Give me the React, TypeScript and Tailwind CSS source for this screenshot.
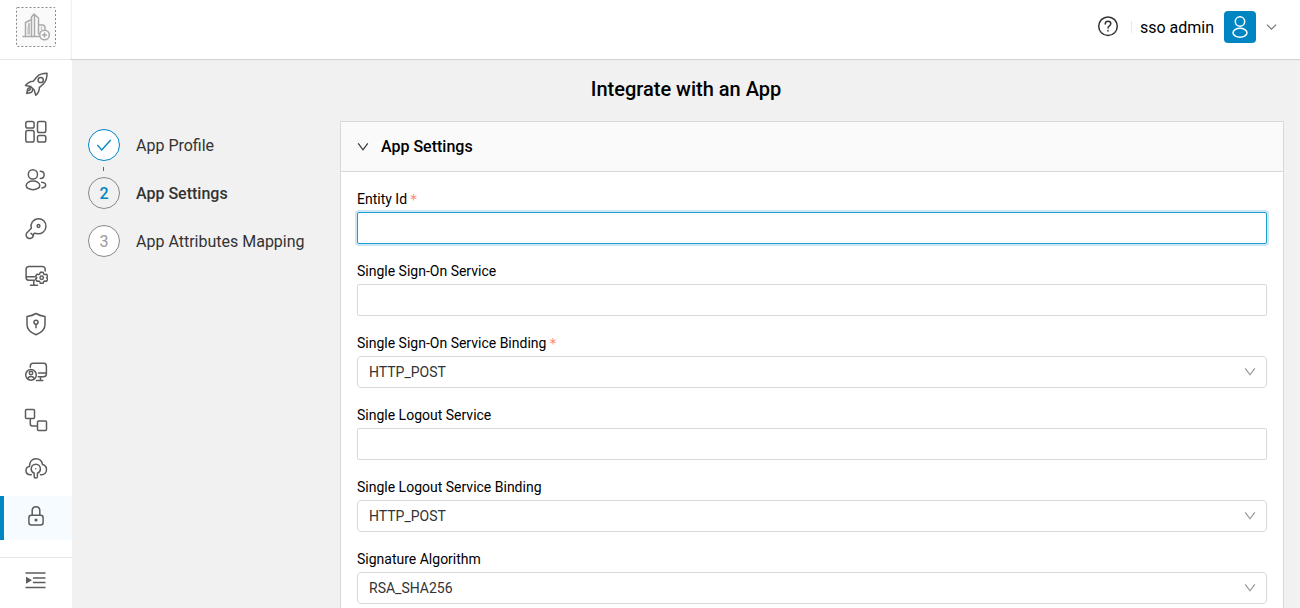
import { useState, type ReactNode } from "react";

function Icon({ children, className = "size-6" }: { children: ReactNode; className?: string }) {
  return (
    <svg
      viewBox="0 0 24 24"
      className={className}
      fill="none"
      stroke="currentColor"
      strokeWidth="1.5"
      strokeLinecap="round"
      strokeLinejoin="round"
      aria-hidden="true"
    >
      {children}
    </svg>
  );
}

const navItems: { label: string; icon: ReactNode }[] = [
  {
    label: "Get started",
    icon: (
      <>
        <path d="M23 1.300c-4.300 0-7.500 .9-10 3.500L9.300 9.200c-2.800 .1-5.300 1.300-7.800 4.200l5.200 1.100 3.500 3.500 1.600 5.300c2.600-2.300 3.600-4.900 3.500-7.700l4.200-3.800c2.700-2.800 3.600-6 3.500-10.500z" />
        <circle cx="16.700" cy="8" r="2.600" />
        <path d="M7 15.800c-1.800-.3-3.300 .7-3.600 2.300l-.6 3.300 3.300-.6c1.700-.3 2.700-1.900 2.400-3.600M6.300 17.300l-1.500 1.500" />
      </>
    ),
  },
  {
    label: "Dashboard",
    icon: (
      <>
        <rect x="1.800" y="1.500" width="8.300" height="6.500" rx="1.800" />
        <rect x="1.800" y="10.600" width="8.300" height="11.500" rx="1.800" />
        <rect x="13.500" y="1.500" width="8.300" height="11" rx="1.800" />
        <rect x="13.500" y="15.600" width="8.300" height="6.500" rx="1.800" />
      </>
    ),
  },
  {
    label: "Users",
    icon: (
      <>
        <circle cx="8.900" cy="6.400" r="4.600" />
        <ellipse cx="9" cy="17.400" rx="6.800" ry="4.300" />
        <path d="M16.300 3.200c2.300 0 3.800 1.500 3.800 3.600s-1.500 3.800-3.800 3.800M17.700 14.300c2.400 .3 4 1.300 4 2.900s-1.600 2.500-3.800 2.800" />
      </>
    ),
  },
  {
    label: "Credentials",
    icon: (
      <>
        <path d="M7.300 12.200a7.500 7.500 0 1 1 5.300 5.200l-2.300-.2-1.200 1.500.1 1.700c-.9 1.900-3.500 2.600-5.300 1.600-1.900-1-2.300-3.400-1.100-5.100z" />
        <circle cx="14.500" cy="10" r="1.400" />
        <path d="M7 17.300l2 2" />
      </>
    ),
  },
  {
    label: "Device settings",
    icon: (
      <>
        <path d="M21.200 7V5.200c0-1.700-1.100-2.800-2.800-2.800H5c-1.700 0-2.900 1.100-2.900 2.800v8.300c0 1.700 1.200 2.800 2.900 2.800h5.500M2.200 12.800h8.500M9.800 16.500v4.600M6.500 21.300h7" />
        <path d="M16.300 8.200h2.800l.5 1.700 1.200 .7 1.700-.4 1.300 2.200-1.200 1.300 1.200 1.400-1.300 2.200-1.700-.4-1.200 .7-.5 1.700h-2.800l-.5-1.700-1.200-.7-1.700 .4-1.300-2.200 1.200-1.400-1.200-1.300 1.300-2.200 1.700 .4 1.200-.7z" />
        <circle cx="17.700" cy="13.700" r="1.700" />
      </>
    ),
  },
  {
    label: "Security",
    icon: (
      <>
        <path d="M12 1.500c2.600 1.700 5.300 2.500 9 2.900v8.100c0 4.500-3.500 8.200-9 10.200-5.500-2-9-5.700-9-10.200V4.400c3.700-.4 6.400-1.200 9-2.900z" />
        <circle cx="12" cy="10.200" r="2" />
        <path d="M12 12.300v3.400" />
      </>
    ),
  },
  {
    label: "Remote access",
    icon: (
      <>
        <path d="M6.300 7.300V6.200c0-1.800 1-2.900 2.700-2.900h10.700c1.700 0 2.700 1.100 2.700 2.900v7.600c0 1.800-1 2.900-2.700 2.900h-5.500M14.500 13h7.800M16.500 17v3.300M12.500 20.500h6.300" />
        <circle cx="7" cy="14.900" r="5.300" />
        <circle cx="7" cy="13" r="1.700" />
        <path d="M3.800 18.800c.3-1.600 1.400-2.400 3.200-2.400s2.900 .8 3.200 2.400" />
      </>
    ),
  },
  {
    label: "Provisioning",
    icon: (
      <>
        <rect x="1.500" y="1.500" width="9" height="9" rx="1" />
        <rect x="13.500" y="13" width="9" height="9.500" rx="1" />
        <path d="M6.300 10.800v5.200c0 1.200.7 1.900 1.900 1.900h5" />
      </>
    ),
  },
  {
    label: "Cloud",
    icon: (
      <>
        <path d="M7.300 18.700H6.500c-2.700 0-4.500-1.700-4.500-4.200 0-2.200 1.400-3.800 3.500-4.100C5.200 5.900 8 2.700 12 2.700c3.600 0 6 2.300 6.500 5.900 2.500 .6 4 2.400 4 4.900 0 3-2 5.200-5 5.200h-1" />
        <path d="M10.200 17.200c-1.800-.7-3-2.300-3-4.300 0-2.700 2-4.600 4.600-4.600s4.600 1.900 4.600 4.600c0 2-1.200 3.600-3 4.300v3.200c0 2.200-3.200 2.200-3.200 0z" />
        <circle cx="11.800" cy="12.800" r=".7" fill="currentColor" stroke="none" />
      </>
    ),
  },
  {
    label: "Applications",
    icon: (
      <>
        <rect x="4.900" y="11.200" width="14.200" height="9.900" rx="2.500" />
        <path d="M8.200 11V6.700C8.200 4.300 9.800 2.700 12 2.700s3.800 1.600 3.800 4V11" />
        <circle cx="12" cy="16" r=".8" fill="currentColor" />
      </>
    ),
  },
];

function Chevron({ className }: { className: string }) {
  return (
    <svg viewBox="0 0 12 12" className={className} fill="none" stroke="currentColor" strokeWidth="1.200" aria-hidden="true">
      <path d="M1.200 2.300L6 8.800l4.800-6.500" />
    </svg>
  );
}

function Sidebar() {
  return (
    <aside className="flex w-18 shrink-0 flex-col bg-white">
      <a href="#home" aria-label="Organization logo" className="flex h-15 shrink-0 justify-center border-b border-[#e8e8e8] pt-[7px]">
        <svg viewBox="0 0 40 40" className="size-10" fill="none" aria-hidden="true">
          <rect x=".5" y=".5" width="39" height="39" rx="1" fill="#fafafa" stroke="#888" strokeDasharray="2 2" />
          <g stroke="#aaa" strokeWidth="1.500" strokeLinejoin="round" strokeLinecap="round">
            <path d="M7 29.500h17" />
            <path d="M9.500 29V15.500l5-2.500M13 16.500V27M15.500 29V10l2.500-3 4.500 4v16M18.500 8v21M23.500 18h4l1.500 2v2.500" />
            <path d="M12 19.500V27M25.500 20v3" stroke="#ccc" />
            <circle cx="28.500" cy="28" r="4.800" fill="#fafafa" />
            <path d="M28.500 26v4M26.500 28h4" />
          </g>
        </svg>
      </a>
      <nav aria-label="Main" className="flex flex-1 flex-col gap-1 pt-1 text-[#5c5c5c]">
        {navItems.map((item, index) => {
          const active = index === navItems.length - 1;
          return (
            <a
              key={item.label}
              href="#nav"
              aria-label={item.label}
              aria-current={active ? "page" : undefined}
              className={
                active
                  ? "flex h-11 justify-center border-l-4 border-[#0085c3] bg-[#f5fbff] pt-2 pr-1"
                  : "flex h-11 justify-center pt-2"
              }
            >
              <Icon>{item.icon}</Icon>
            </a>
          );
        })}
      </nav>
      <button type="button" aria-label="Expand menu" className="flex h-[51px] shrink-0 justify-center border-t border-[#e8e8e8] pt-2.5 text-[#5c5c5c]">
        <Icon>
          <path d="M1.500 5h20M9 10h12.500M9 14.500h12.500M1.500 19.500h20" strokeLinecap="butt" />
          <path d="M2 8.800v7l6-3.500z" fill="currentColor" stroke="none" />
        </Icon>
      </button>
    </aside>
  );
}

function Header() {
  return (
    <header className="z-10 -ml-px flex h-[59px] shrink-0 items-start justify-end border-l border-[#f0f0f0] bg-white pt-[11px] pr-[23px] leading-[25px] shadow-[0_1px_1px_rgba(0,0,0,0.12)]">
      <div className="flex h-8 items-center">
        <button type="button" aria-label="Help" className="mr-[11px] text-[#333]">
          <Icon>
            <circle cx="12" cy="11.200" r="9.300" />
            <path d="M9.200 9c.1-1.700 1.200-2.700 2.800-2.700s2.800 1 2.800 2.500c0 2-2.800 2.200-2.800 4.300M12 15.500v.5" />
          </Icon>
        </button>
        <span className="mr-2 h-3 w-px bg-[#e8e8e8]" />
        <button type="button" className="flex items-center text-black">
          <span>sso admin</span>
          <span className="mr-2.5 ml-2.5 flex size-8 items-center justify-center rounded bg-[#0085c3] text-white">
            <Icon>
              <circle cx="12" cy="6.500" r="4.700" />
              <ellipse cx="12" cy="17.800" rx="7" ry="4.500" />
            </Icon>
          </span>
          <svg viewBox="0 0 12 12" className="size-[11px] text-[#777]" fill="none" stroke="currentColor" strokeWidth="1.300" aria-hidden="true">
            <path d="M1 2.800l5 5 5-5" />
          </svg>
        </button>
      </div>
    </header>
  );
}

function Steps() {
  return (
    <ol className="flex w-[252px] shrink-0 flex-col pt-2 leading-[25px] text-[#333]">
      <li className="flex items-center gap-4">
        <span className="flex size-8 items-center justify-center rounded-full border border-[#0085c3] bg-white text-[#0085c3]">
          <svg viewBox="0 0 16 16" className="size-4" fill="none" stroke="currentColor" strokeWidth="1.300" aria-hidden="true">
            <path d="M1.300 7.800l4.400 5.200 9-10" />
          </svg>
        </span>
        App Profile
      </li>
      <li aria-hidden="true" className="flex h-4 w-[31px] items-center justify-center">
        <span className="h-1 w-px bg-[#0085c3]" />
      </li>
      <li aria-current="step" className="mb-4 flex items-center gap-4 font-medium">
        <span className="flex size-8 items-center justify-center rounded-full border border-[#888] text-[#0085c3]">2</span>
        App Settings
      </li>
      <li className="flex items-center gap-4">
        <span className="flex size-8 items-center justify-center rounded-full border border-[#888] bg-white text-[#999]">3</span>
        App Attributes Mapping
      </li>
    </ol>
  );
}

function FieldLabel({ id, label, required }: { id: string; label: string; required?: boolean }) {
  return (
    <label htmlFor={id} className="mb-0.5 flex h-[22px] items-center gap-[3px] text-sm text-black">
      {label}
      {required && <span className="font-['DejaVu_Sans',sans-serif] text-[#ff7875]">*</span>}
    </label>
  );
}

function TextField({ id, label, required, active }: { id: string; label: string; required?: boolean; active?: boolean }) {
  const [value, setValue] = useState("");
  return (
    <div>
      <FieldLabel id={id} label={label} required={required} />
      <input
        id={id}
        type="text"
        required={required}
        value={value}
        onChange={(event) => setValue(event.target.value)}
        className={
          active
            ? "block h-8 w-full rounded-xs border border-[#1f9dd0] bg-white px-[11px] text-sm shadow-[0_0_0_2px_rgba(0,133,195,0.2)] outline-none"
            : "block h-8 w-full rounded-xs border border-[#d9d9d9] bg-white px-[11px] text-sm outline-none"
        }
      />
    </div>
  );
}

function SelectField({ id, label, required, options }: { id: string; label: string; required?: boolean; options: string[] }) {
  return (
    <div>
      <FieldLabel id={id} label={label} required={required} />
      <div className="relative">
        <select
          id={id}
          className="block h-8 w-full appearance-none rounded border border-[#d9d9d9] bg-white px-[11px] text-sm text-[#333] outline-none"
        >
          {options.map((option) => (
            <option key={option}>{option}</option>
          ))}
        </select>
        <span className="pointer-events-none absolute inset-y-0 right-[11px] flex items-center text-[#999]">
          <Chevron className="size-3" />
        </span>
      </div>
    </div>
  );
}

export default function App() {
  const [open, setOpen] = useState(true);
  return (
    <div className="flex h-screen overflow-hidden bg-[#f1f1f1] font-[Roboto,sans-serif] text-base">
      <Sidebar />
      <div className="flex min-w-0 flex-1 flex-col">
        <Header />
        <main className="flex-1 overflow-y-auto px-4 pt-4 pb-4 [scrollbar-width:none]">
          <h1 className="mb-[18px] text-center text-xl leading-7 font-medium text-black">Integrate with an App</h1>
          <div className="flex items-start">
            <Steps />
            <section className="min-w-0 flex-1 border border-[#d9d9d9] bg-white">
              <h2 className="border-b border-[#d9d9d9] bg-[#fafafa]">
                <button
                  type="button"
                  aria-expanded={open}
                  onClick={() => setOpen(!open)}
                  className="flex h-[49px] w-full items-center gap-3 px-4 font-medium text-black"
                >
                  <Chevron className="size-3 text-[#333]" />
                  App Settings
                </button>
              </h2>
              {open && (
                <form className="flex flex-col gap-4 p-4">
                  <TextField id="entity-id" label="Entity Id" required active />
                  <TextField id="sso-service" label="Single Sign-On Service" />
                  <SelectField id="sso-binding" label="Single Sign-On Service Binding" required options={["HTTP_POST", "HTTP_REDIRECT"]} />
                  <TextField id="slo-service" label="Single Logout Service" />
                  <SelectField id="slo-binding" label="Single Logout Service Binding" options={["HTTP_POST", "HTTP_REDIRECT"]} />
                  <SelectField id="signature" label="Signature Algorithm" options={["RSA_SHA256", "RSA_SHA1"]} />
                </form>
              )}
            </section>
          </div>
        </main>
      </div>
    </div>
  );
}
